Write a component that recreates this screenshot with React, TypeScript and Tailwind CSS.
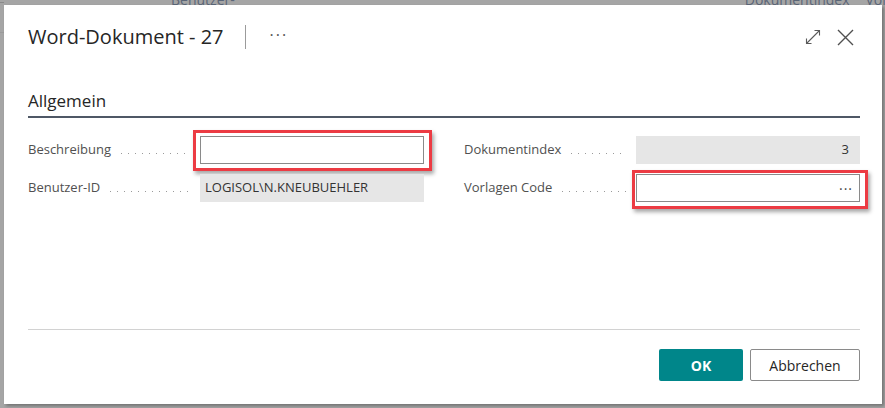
import { ReactNode } from "react"

const font = { fontFamily: '"Open Sans", "Noto Sans", sans-serif' }

const Leader = () => (
  <div className="ml-[10px] mr-[10px] h-px flex-1 bg-[linear-gradient(to_right,#9a9a9a_1px,transparent_1px)] bg-[length:7px_1px] bg-repeat-x" />
)

interface FieldProps {
  label: string
  children: ReactNode
}

const Field = ({ label, children }: FieldProps) => (
  <div className="flex h-[28px] items-center">
    <div className="flex w-[172px] items-baseline">
      <span className="text-[13px] text-[#505050]">{label}</span>
      <Leader />
    </div>
    <div className="relative h-full flex-1">{children}</div>
  </div>
)

// red review marker drawn around a field
const Marker = ({ className }: { className: string }) => (
  <div
    className={`pointer-events-none absolute border-[3px] border-[#ec3b43] shadow-[2px_3px_4px_rgba(0,0,0,0.35)] ${className}`}
  />
)

const ExpandIcon = () => (
  <svg width="16" height="16" viewBox="0 0 16 16" fill="none" stroke="#5a5a5a" strokeWidth="1.1">
    <path d="M1.5 14.5 14.5 1.5" />
    <path d="M9.5 1.5h5v5" />
    <path d="M1.5 9.5v5h5" />
  </svg>
)

const CloseIcon = () => (
  <svg width="17" height="17" viewBox="0 0 17 17" fill="none" stroke="#505050" strokeWidth="1.4">
    <path d="M1 1 16 16M16 1 1 16" />
  </svg>
)

export default function App() {
  return (
    <div style={font} className="relative h-[408px] w-[885px] overflow-hidden bg-[#a5a5a5]">
      {/* page underneath the dialog */}
      <div className="-mt-[11px] flex h-[16px] text-[14px] text-[#5b6678]">
        <span className="ml-[171px]">Benutzer-ID</span>
        <span className="ml-[510px]">Dokumentindex</span>
        <span className="ml-[16px]">Vorlagen</span>
      </div>
      <div className="mt-[-3px] h-px w-[4px] bg-[#8a8a8a]" />
      <div className="mt-[29px] h-px w-[4px] bg-[#9a9a9a]" />

      <div className="absolute left-[4px] top-[5px] flex h-[399px] w-[878px] flex-col bg-white pl-6 pr-[22px] shadow-[2px_2px_3px_rgba(0,0,0,0.3)]">
        <div className="flex h-[64px] items-center">
          <h1 className="text-[20px] text-[#262626]">Word-Dokument - 27</h1>
          <div className="ml-[21px] h-[24px] w-px bg-[#9b9b9b]" />
          <span className="ml-[24px] -mt-[4px] text-[16px] tracking-[2px] text-[#555]">···</span>
          <div className="ml-auto mr-[6px] flex items-center gap-[16px]">
            <ExpandIcon />
            <CloseIcon />
          </div>
        </div>

        <div className="mt-[20px] border-b-2 border-[#4f5866] pb-[3px]">
          <h2 className="text-[17px] leading-[24px] text-[#262626]">Allgemein</h2>
        </div>

        <div className="mt-[18px] grid grid-cols-2 gap-x-[40px] gap-y-[10px]">
          <Field label="Beschreibung">
            <div className="h-full border border-[#8a8a8a] bg-white" />
            <Marker className="-left-[7px] -right-[8px] -top-[6px] -bottom-[7px]" />
          </Field>
          <Field label="Dokumentindex">
            <div className="flex h-full items-center justify-end bg-[#e6e6e6] px-[11px] text-[13px] text-[#333]">
              3
            </div>
          </Field>
          <Field label="Benutzer-ID">
            <div className="flex h-full items-center bg-[#e6e6e6] px-[5px] text-[13px] text-[#333]">
              LOGISOL\N.KNEUBUEHLER
            </div>
          </Field>
          <Field label="Vorlagen Code">
            <div className="flex h-full items-center justify-end border border-[#8a8a8a] bg-white px-[6px] text-[14px] tracking-[1px] text-[#444]">
              ···
            </div>
            <Marker className="-left-[4px] -right-[8px] -top-[4px] -bottom-[7px]" />
          </Field>
        </div>

        <div className="mt-auto border-t border-[#d2d2d2] pb-[23px] pt-[19px]">
          <div className="flex justify-end gap-[7px]">
            <button className="h-[32px] w-[84px] rounded-[2px] bg-[#00868a] text-[14px] font-bold text-white">
              OK
            </button>
            <button className="h-[32px] w-[110px] rounded-[2px] border border-[#8a8a8a] bg-white text-[14px] text-[#262626]">
              Abbrechen
            </button>
          </div>
        </div>
      </div>
    </div>
  )
}
